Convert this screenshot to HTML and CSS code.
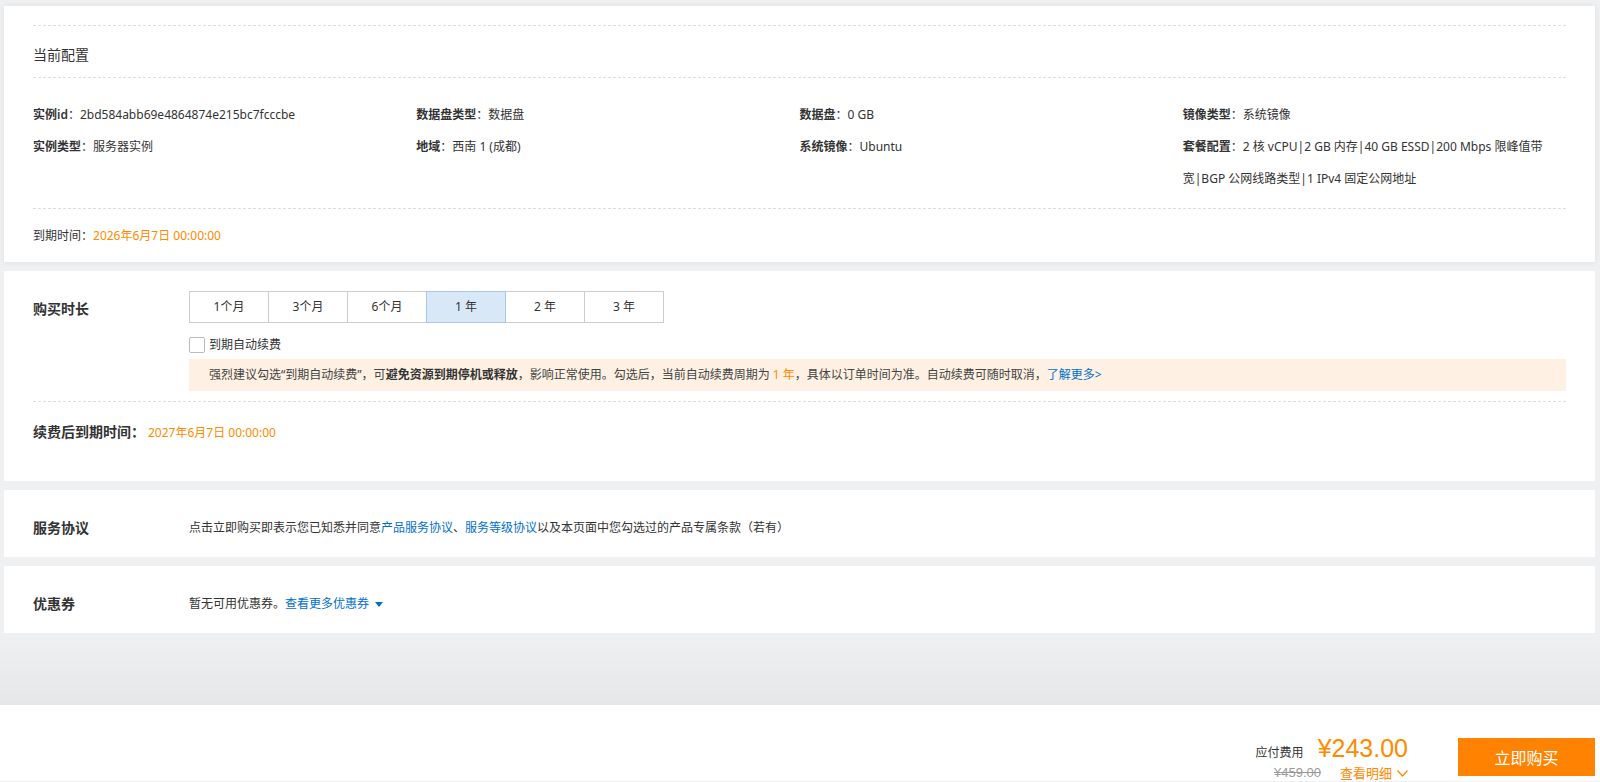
FILE: index.html
```html
<!DOCTYPE html>
<html lang="zh-CN">
<head>
  <meta charset="UTF-8" />
  <title>续费 - 轻量应用服务器</title>
  <link rel="stylesheet" href="styles.css">
</head>
<body>

  <div class="page">

    <!-- Configuration actuelle -->
    <section class="card config">
      <div class="config-head">当前配置</div>
      <div class="config-grid">
        <div class="item"><b>实例id</b>：2bd584abb69e4864874e215bc7fcccbe</div>
        <div class="item"><b>数据盘类型</b>：数据盘</div>
        <div class="item"><b>数据盘</b>：0 GB</div>
        <div class="item"><b>镜像类型</b>：系统镜像</div>
        <div class="item"><b>实例类型</b>：服务器实例</div>
        <div class="item"><b>地域</b>：西南 1 (成都)</div>
        <div class="item"><b>系统镜像</b>：Ubuntu</div>
        <div class="item"><b>套餐配置</b>：2 核 vCPU|2 GB 内存|40 GB ESSD|200 Mbps 限峰值带宽|BGP 公网线路类型|1 IPv4 固定公网地址</div>
      </div>
      <div class="config-foot">到期时间：<span class="orange">2026年6月7日 00:00:00</span></div>
    </section>

    <!-- Durée d'achat -->
    <section class="card duration">
      <div class="row">
        <div class="label">购买时长</div>
        <div class="field">
          <div class="periods">
            <div class="period">1个月</div>
            <div class="period">3个月</div>
            <div class="period">6个月</div>
            <div class="period active">1 年</div>
            <div class="period">2 年</div>
            <div class="period">3 年</div>
          </div>
          <label class="auto-renew"><span class="checkbox"></span>到期自动续费</label>
          <div class="notice">
            强烈建议勾选“到期自动续费”，可<b>避免资源到期停机或释放</b>，影响正常使用。勾选后，当前自动续费周期为 <span class="orange">1 年</span>，具体以订单时间为准。自动续费可随时取消，<a href="#">了解更多&gt;</a>
          </div>
        </div>
      </div>
      <div class="new-expire">
        <span class="label-inline">续费后到期时间：</span><span class="orange">2027年6月7日 00:00:00</span>
      </div>
    </section>

    <section class="card simple">
      <div class="label">服务协议</div>
      <div class="field">点击立即购买即表示您已知悉并同意<a href="#">产品服务协议</a>、<a href="#">服务等级协议</a>以及本页面中您勾选过的产品专属条款（若有）</div>
    </section>

    <section class="card simple">
      <div class="label">优惠券</div>
      <div class="field">暂无可用优惠券。<a href="#">查看更多优惠券</a><span class="caret"></span></div>
    </section>
  </div>

  <div class="fade"></div>

  <!-- Barre de paiement -->
  <div class="paybar">
    <div class="price">
      <div class="price-top"><span class="price-label">应付费用</span><span class="amount">¥243.00</span></div>
      <div class="price-bottom">
        <span class="old">¥459.00</span>
        <a href="#" class="detail">查看明细
          <svg width="11" height="7" viewBox="0 0 11 7"><path d="M0.5 0.5 L5.5 6 L10.5 0.5" fill="none" stroke="#ff8a00" stroke-width="1.2"/></svg>
        </a>
      </div>
    </div>
    <button class="buy-btn">立即购买</button>
  </div>

</body>
</html>
```

FILE: styles.css
```css
body {
  margin: 0;
  background: #eff0f2;
  font-family: "Noto Sans", "Noto Sans CJK SC", sans-serif;
  font-size: 12px;
  color: #333;
}
a {
  color: #0070cc;
  text-decoration: none;
}
b {
  font-weight: 600;
}
.orange {
  color: #ff8a00;
}
.page {
  padding: 6px 5px 0 4px;
}
.card {
  background: #fff;
  padding: 0 29px;
  margin-bottom: 9px;
}
.card:last-child {
  margin-bottom: 0;
}

/* config */
.config {
  padding-top: 19px;
  box-shadow: 0 0 6px rgba(0, 0, 0, 0.08);
}
.config-head {
  border-top: 1px dashed #ddd;
  border-bottom: 1px dashed #ddd;
  padding: 19px 0 12px;
  line-height: 20px;
  font-size: 14px;
}
.config-grid {
  display: grid;
  grid-template-columns: repeat(4, 1fr);
  padding: 21px 0 13px;
  line-height: 32px;
}
.config-grid .item {
  padding-right: 18px;
}
.config-foot {
  border-top: 1px dashed #ddd;
  padding: 17px 0 16px;
  line-height: 20px;
}

/* duration */
.duration {
  padding-top: 20px;
  padding-bottom: 38px;
}
.row {
  display: flex;
}
.label {
  width: 156px;
  flex: none;
  font-size: 14px;
  font-weight: 600;
  line-height: 20px;
}
.row .label {
  padding-top: 8px;
}
.field {
  flex: 1;
}
.periods {
  display: flex;
}
.period {
  width: 78px;
  height: 30px;
  line-height: 30px;
  text-align: center;
  border: 1px solid #ccc;
  margin-left: -1px;
  background: #fff;
}
.period:first-child {
  margin-left: 0;
}
.period.active {
  background: #d9e8f7;
  border-color: #a6c8ec;
  position: relative;
}
.auto-renew {
  display: flex;
  align-items: center;
  margin-top: 14px;
  line-height: 16px;
}
.checkbox {
  width: 14px;
  height: 14px;
  border: 1px solid #bbb;
  border-radius: 2px;
  margin-right: 4px;
}
.notice {
  margin-top: 6px;
  background: #fef1e3;
  line-height: 32px;
  padding: 0 20px;
  color: #444;
}
.notice b {
  color: #333;
}
.new-expire {
  margin-top: 10px;
  border-top: 1px dashed #ddd;
  padding-top: 20px;
  line-height: 20px;
}
.label-inline {
  font-size: 14px;
  font-weight: 600;
  margin-right: 3px;
}

/* agreements and coupons */
.simple {
  display: flex;
  padding-top: 28px;
  padding-bottom: 19px;
}
.simple .field {
  line-height: 20px;
}
.caret {
  display: inline-block;
  margin-left: 6px;
  border-left: 4px solid transparent;
  border-right: 4px solid transparent;
  border-top: 5px solid #0070cc;
  vertical-align: middle;
}

.fade {
  height: 72px;
  background: linear-gradient(#eff0f2, #e6e7e9);
}

/* pay bar */
.paybar {
  background: #fff;
  height: 76px;
  display: flex;
  justify-content: flex-end;
  align-items: flex-start;
  padding: 29px 5px 0 0;
  box-sizing: border-box;
}
.price {
  text-align: right;
  margin-right: 50px;
}
.price-top {
  display: flex;
  align-items: baseline;
  justify-content: flex-end;
  line-height: 28px;
}
.price-label {
  font-size: 12px;
  margin-right: 14px;
}
.amount {
  font-family: "Liberation Sans", sans-serif;
  font-size: 25px;
  color: #ff8a00;
}
.price-bottom {
  display: flex;
  align-items: center;
  justify-content: flex-end;
  line-height: 16px;
  margin-top: -2px;
}
.old {
  font-family: "Liberation Sans", sans-serif;
  font-size: 13px;
  color: #999;
  text-decoration: line-through;
  margin-right: 19px;
}
.detail {
  font-size: 13px;
  color: #ff8a00;
  display: flex;
  align-items: center;
}
.detail svg {
  margin-left: 5px;
}
.buy-btn {
  margin-top: 4px;
  width: 137px;
  height: 38px;
  border: none;
  background: #ff8200;
  color: #fff;
  font-family: inherit;
  font-size: 16px;
  cursor: pointer;
}
```
